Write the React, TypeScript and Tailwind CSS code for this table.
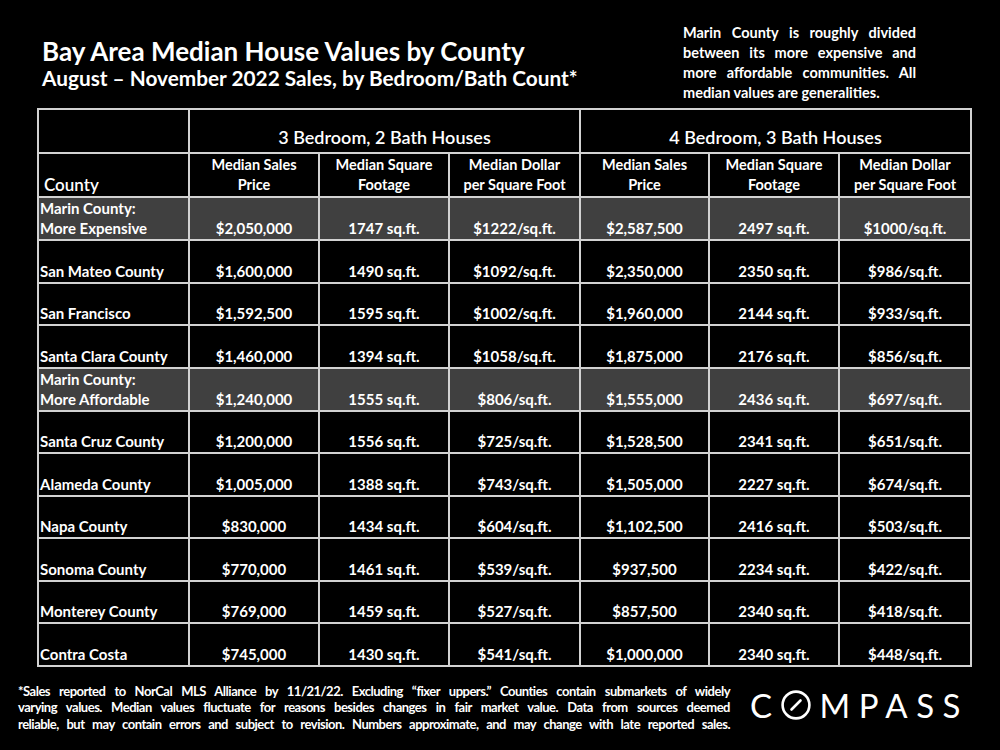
import React from 'react';

type Row = {
  county: string[];
  values: string[];
  highlight?: boolean;
};

const rows: Row[] = [
  { county: ['Marin County:', 'More Expensive'], values: ['$2,050,000', '1747 sq.ft.', '$1222/sq.ft.', '$2,587,500', '2497 sq.ft.', '$1000/sq.ft.'], highlight: true },
  { county: ['San Mateo County'], values: ['$1,600,000', '1490 sq.ft.', '$1092/sq.ft.', '$2,350,000', '2350 sq.ft.', '$986/sq.ft.'] },
  { county: ['San Francisco'], values: ['$1,592,500', '1595 sq.ft.', '$1002/sq.ft.', '$1,960,000', '2144 sq.ft.', '$933/sq.ft.'] },
  { county: ['Santa Clara County'], values: ['$1,460,000', '1394 sq.ft.', '$1058/sq.ft.', '$1,875,000', '2176 sq.ft.', '$856/sq.ft.'] },
  { county: ['Marin County:', 'More Affordable'], values: ['$1,240,000', '1555 sq.ft.', '$806/sq.ft.', '$1,555,000', '2436 sq.ft.', '$697/sq.ft.'], highlight: true },
  { county: ['Santa Cruz County'], values: ['$1,200,000', '1556 sq.ft.', '$725/sq.ft.', '$1,528,500', '2341 sq.ft.', '$651/sq.ft.'] },
  { county: ['Alameda County'], values: ['$1,005,000', '1388 sq.ft.', '$743/sq.ft.', '$1,505,000', '2227 sq.ft.', '$674/sq.ft.'] },
  { county: ['Napa County'], values: ['$830,000', '1434 sq.ft.', '$604/sq.ft.', '$1,102,500', '2416 sq.ft.', '$503/sq.ft.'] },
  { county: ['Sonoma County'], values: ['$770,000', '1461 sq.ft.', '$539/sq.ft.', '$937,500', '2234 sq.ft.', '$422/sq.ft.'] },
  { county: ['Monterey County'], values: ['$769,000', '1459 sq.ft.', '$527/sq.ft.', '$857,500', '2340 sq.ft.', '$418/sq.ft.'] },
  { county: ['Contra Costa'], values: ['$745,000', '1430 sq.ft.', '$541/sq.ft.', '$1,000,000', '2340 sq.ft.', '$448/sq.ft.'] },
];

const subHeads = [
  ['Median Sales', 'Price'],
  ['Median Square', 'Footage'],
  ['Median Dollar', 'per Square Foot'],
];

const cell = 'border-2 border-[#d2d2d2] align-bottom';

const CompassLogo: React.FC = () => (
  <div className="flex items-center font-[Lato,'Liberation_Sans',sans-serif] font-normal text-[33px] leading-none tracking-[8.5px] text-white">
    <span>C</span>
    <svg width="30" height="30" viewBox="0 0 30 30" className="mr-[9px]">
      <circle cx="15" cy="15" r="13.4" fill="none" stroke="white" strokeWidth="2.6" />
      <line x1="10.5" y1="19.5" x2="19.5" y2="10.5" stroke="white" strokeWidth="2.6" strokeLinecap="round" />
    </svg>
    <span>MPASS</span>
  </div>
);

export default function App() {
  return (
    <div className="w-[1000px] h-[750px] bg-black text-white font-[Lato,'Liberation_Sans',sans-serif] font-bold overflow-hidden">
      <div className="flex h-[108px]">
        <div className="pl-[42px] pt-[36px]">
          <h1 className="text-[26px] leading-[30px]">Bay Area Median House Values by County</h1>
          <h2 className="text-[20.8px] leading-[24px]">August – November 2022 Sales, by Bedroom/Bath Count*</h2>
        </div>
        <div className="ml-auto mr-[84px] w-[233px] pt-[23px] text-[14.5px] leading-[20px]">
          <p className="text-justify [text-align-last:justify]">Marin County is roughly divided</p>
          <p className="text-justify [text-align-last:justify]">between its more expensive and</p>
          <p className="text-justify [text-align-last:justify]">more affordable communities. All</p>
          <p>median values are generalities.</p>
        </div>
      </div>

      <table className="ml-[37px] w-[933px] border-collapse table-fixed">
        <colgroup>
          <col className="w-[151px]" />
          <col className="w-[130px]" />
          <col className="w-[130px]" />
          <col className="w-[131px]" />
          <col className="w-[129px]" />
          <col className="w-[130px]" />
          <col className="w-[132px]" />
        </colgroup>
        <thead>
          <tr className="h-[44px]">
            <th className={cell}></th>
            <th colSpan={3} className={`${cell} text-center text-[18px] font-semibold pb-[1px]`}>3 Bedroom, 2 Bath Houses</th>
            <th colSpan={3} className={`${cell} text-center text-[18px] font-semibold pb-[1px]`}>4 Bedroom, 3 Bath Houses</th>
          </tr>
          <tr className="h-[44px]">
            <th className={`${cell} text-left pl-[5px] text-[17px] font-semibold leading-[20px] pb-[1px]`}>County</th>
            {[0, 1].map((g) =>
              subHeads.map((h, i) => (
                <th key={`${g}-${i}`} className={`${cell} text-center text-[14.5px] leading-[20px] pb-[1px] whitespace-nowrap`}>
                  {h[0]}
                  <br />
                  {h[1]}
                </th>
              ))
            )}
          </tr>
        </thead>
        <tbody>
          {rows.map((r, idx) => (
            <tr key={idx} className={`h-[42.5px] ${r.highlight ? 'bg-[#404040]' : ''}`}>
              <td className={`${cell} text-left pl-[1px] text-[15px] leading-[20px] pb-[1px] whitespace-nowrap`}>
                {r.county.map((c, i) => (
                  <div key={i}>{c}</div>
                ))}
              </td>
              {r.values.map((v, i) => (
                <td key={i} className={`${cell} text-center text-[15px] leading-[20px] pb-[1px] whitespace-nowrap`}>
                  {v}
                </td>
              ))}
            </tr>
          ))}
        </tbody>
      </table>

      <div className="flex items-start mt-[16px]">
        <div className="ml-[18px] w-[712px] text-[13px] leading-[16.5px] tracking-[-0.5px]">
          <p className="whitespace-nowrap text-justify [text-align-last:justify]">*Sales reported to NorCal MLS Alliance by 11/21/22. Excluding “fixer uppers.” Counties contain submarkets of widely</p>
          <p className="whitespace-nowrap text-justify [text-align-last:justify]">varying values. Median values fluctuate for reasons besides changes in fair market value. Data from sources deemed</p>
          <p className="whitespace-nowrap text-justify [text-align-last:justify]">reliable, but may contain errors and subject to revision.  Numbers approximate, and may change with late reported sales.</p>
        </div>
        <div className="ml-[20px] mt-[6px]">
          <CompassLogo />
        </div>
      </div>
    </div>
  );
}
